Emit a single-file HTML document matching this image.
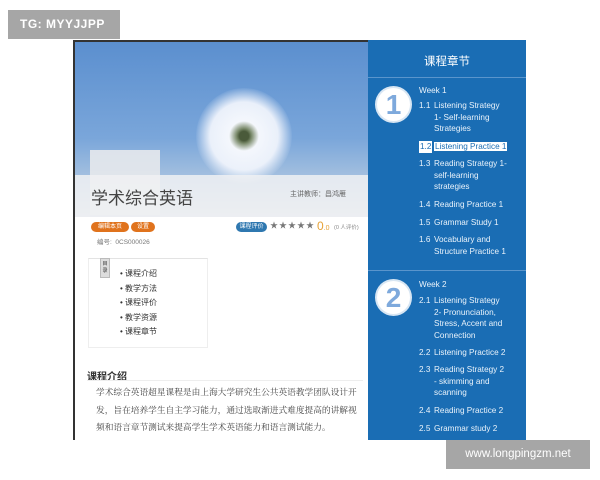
<!DOCTYPE html>
<html><head><meta charset="utf-8"><style>
*{margin:0;padding:0;box-sizing:border-box}
body{width:600px;height:480px;background:#fff;position:relative;overflow:hidden;font-family:"Liberation Sans","Noto Sans CJK SC",sans-serif}
.a{position:absolute;white-space:nowrap}
.sb{position:absolute;left:368px;top:40px;width:158px;height:400px;background:#1a6db4;color:#fff}
.it{position:absolute;left:66px;font-size:8.2px;line-height:11.6px;color:#eaf3fb;white-space:nowrap}
.it b{font-weight:normal;position:absolute;left:-15px;top:0}
.circ{position:absolute;left:9px;width:33px;height:33px;border-radius:50%;background:#fff;color:#7ea9dc;font-size:28px;font-weight:bold;text-align:center;line-height:33px;box-shadow:0 0 0 2px #d8e6f3}
.li{position:absolute;left:120px;font-size:8px;color:#333}
</style></head><body>
<div class="a" style="left:8px;top:10px;width:112px;height:29px;background:#a6a6a6;color:#fff;font-size:12px;font-weight:bold;line-height:29px;padding-left:12px;letter-spacing:.5px">TG: MYYJJPP</div>
<div class="a" style="left:73px;top:40px;width:2px;height:400px;background:#333"></div>
<div class="a" style="left:73px;top:40px;width:295px;height:2px;background:#333"></div>
<div class="a" style="left:75px;top:42px;width:293px;height:175px;background:linear-gradient(180deg,#5b8fcf 0%,#7aa6da 55%,#a9c3e0 80%,#d8dfe6 100%)"></div>
<div class="a" style="left:90px;top:150px;width:70px;height:65px;background:#e7e9ec;opacity:.9"></div>
<div class="a" style="left:196px;top:88px;width:96px;height:96px;border-radius:50%;background:radial-gradient(circle,#4a5a3a 0 7%,#7a8a6a 11%,#f4f7fc 22%,rgba(240,244,252,.95) 50%,rgba(220,230,245,0) 72%)"></div>
<div class="a" style="left:75px;top:175px;width:293px;height:42px;background:rgba(240,241,243,.85)"></div>
<div class="a" style="left:91px;top:184px;font-size:17px;color:#444">学术综合英语</div>
<div class="a" style="left:290px;top:189px;font-size:7px;color:#666">主讲教师：昌鸿雁</div>
<div class="a" style="left:91px;top:222px;width:38px;height:10px;border-radius:5px;background:#e0731d;color:#fff;font-size:6px;line-height:10px;text-align:center">编辑本页</div>
<div class="a" style="left:131px;top:222px;width:24px;height:10px;border-radius:5px;background:#e0731d;color:#fff;font-size:6px;line-height:10px;text-align:center">设置</div>
<div class="a" style="left:97px;top:236px;font-size:6.5px;color:#777">编号: &nbsp;0CS000026</div>
<div class="a" style="left:236px;top:222px;width:31px;height:10px;border-radius:5px;background:#2f78b0;color:#fff;font-size:6px;line-height:10px;text-align:center">课程评价</div>
<div class="a" style="left:270px;top:220px;font-size:8px;color:#777;letter-spacing:1px">★★★★★</div>
<div class="a" style="left:317px;top:219px;font-size:12px;color:#e6a236">0<span style="font-size:7px">.0</span></div>
<div class="a" style="left:334px;top:223px;font-size:5.5px;color:#888">(0 人评价)</div>
<div class="a" style="left:88px;top:258px;width:120px;height:90px;border:1px solid #eee;border-top:1px solid #e3e3e3"></div>
<div class="a" style="left:100px;top:258px;width:10px;height:20px;background:#ddd;border:1px solid #bbb;font-size:5px;color:#333;text-align:center;line-height:7px;padding-top:2px;white-space:normal">目录</div>
<div class="li" style="top:268px">• 课程介绍</div>
<div class="li" style="top:283px">• 教学方法</div>
<div class="li" style="top:297px">• 课程评价</div>
<div class="li" style="top:312px">• 教学资源</div>
<div class="li" style="top:326px">• 课程章节</div>
<div class="a" style="left:87px;top:368px;font-size:10px;font-weight:bold;color:#333">课程介绍</div>
<div class="a" style="left:87px;top:380px;width:276px;height:1px;background:#eee"></div>
<div class="a" style="left:96px;top:384px;font-family:'Noto Serif CJK SC',serif;font-size:8.7px;line-height:17.5px;color:#444">学术综合英语超星课程是由上海大学研究生公共英语教学团队设计开<br>发，旨在培养学生自主学习能力，通过选取渐进式难度提高的讲解视<br>频和语言章节测试来提高学生学术英语能力和语言测试能力。</div>
<div class="sb">
<div class="a" style="left:0;width:158px;top:13px;text-align:center;font-size:11.5px">课程章节</div>
<div class="a" style="left:0;top:37px;width:158px;height:1px;background:#5a95cc"></div>
<div class="circ" style="top:48px">1</div>
<div class="it" style="left:51px;top:45px">Week 1</div>
<div class="it" style="top:60px"><b>1.1</b>Listening Strategy<br>1- Self-learning<br>Strategies</div>
<div class="it" style="top:101px"><b style="background:#fff;color:#1a6db4;padding:0 1px">1.2</b><span style="background:#fff;color:#1a6db4;padding:0 1px">Listening Practice 1</span></div>
<div class="it" style="top:118px"><b>1.3</b>Reading Strategy 1-<br>self-learning<br>strategies</div>
<div class="it" style="top:159px"><b>1.4</b>Reading Practice 1</div>
<div class="it" style="top:177px"><b>1.5</b>Grammar Study 1</div>
<div class="it" style="top:194px"><b>1.6</b>Vocabulary and<br>Structure Practice 1</div>
<div class="a" style="left:0;top:230px;width:158px;height:1px;background:#5a95cc"></div>
<div class="circ" style="top:241px">2</div>
<div class="it" style="left:51px;top:239px">Week 2</div>
<div class="it" style="top:255px"><b>2.1</b>Listening Strategy<br>2- Pronunciation,<br>Stress, Accent and<br>Connection</div>
<div class="it" style="top:307px"><b>2.2</b>Listening Practice 2</div>
<div class="it" style="top:324px"><b>2.3</b>Reading Strategy 2<br>- skimming and<br>scanning</div>
<div class="it" style="top:365px"><b>2.4</b>Reading Practice 2</div>
<div class="it" style="top:383px"><b>2.5</b>Grammar study 2</div>
</div>
<div class="a" style="left:446px;top:440px;width:144px;height:29px;background:#a6a6a6;color:#fff;font-size:11.5px;line-height:29px;text-align:center">www.longpingzm.net</div>
</body></html>
